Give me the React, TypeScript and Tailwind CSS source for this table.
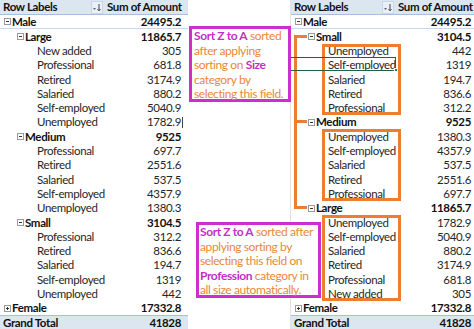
import React from "react";

type Line = { label: string; value: string };

function Expander({ plus = false }: { plus?: boolean }) {
  return (
    <span className="relative inline-block w-[7px] h-[7px] border border-[#9a9a9a] bg-white shrink-0">
      <span className="absolute left-[1px] top-[2px] w-[3px] h-px bg-[#333]" />
      {plus && <span className="absolute left-[2px] top-[1px] w-px h-[3px] bg-[#333]" />}
    </span>
  );
}

function SortButton() {
  return (
    <span className="ml-auto mr-0 w-[12px] h-[13px] border border-[#c9d6e6] bg-[#e9f0f8] flex items-center justify-center">
      <svg width="10" height="9" viewBox="0 0 10 9">
        <path d="M1 5 L4 5 L2.5 7 Z" fill="#666" />
        <path d="M7 1 L7 7.5 M5.5 6 L7 7.8 L8.5 6" stroke="#444" strokeWidth="1" fill="none" />
      </svg>
    </span>
  );
}

function Header() {
  return (
    <div className="flex h-[15px] bg-[#dce6f1] border-b border-[#a7c0de] font-bold text-[#111]">
      <div className="w-[103px] flex items-center pl-[3px]">
        Row Labels
        <SortButton />
      </div>
      <div className="flex-1 flex items-center pl-[4px] whitespace-nowrap">Sum of Amount</div>
    </div>
  );
}

function GroupRow({
  label,
  value,
  level,
  plus = false,
  className = "",
}: {
  label: string;
  value: string;
  level: 0 | 1;
  plus?: boolean;
  className?: string;
}) {
  return (
    <div className={`flex h-[14.3px] items-center font-bold text-[#111] ${className}`}>
      <div className={`w-[103px] flex items-center gap-[1px] ${level === 0 ? "pl-[4px]" : "pl-[17px]"}`}>
        <Expander plus={plus} />
        <span>{label}</span>
      </div>
      <div className="flex-1 text-right pr-[7px]">{value}</div>
    </div>
  );
}

function LeafRow({ label, value }: Line) {
  return (
    <div className="flex h-[14.3px] items-center text-[#262626]">
      <div className="w-[103px] pl-[37px] whitespace-nowrap">{label}</div>
      <div className="flex-1 text-right pr-[7px]">{value}</div>
    </div>
  );
}

function GrandTotal() {
  return (
    <div className="flex h-[14.3px] items-center font-bold text-[#111] bg-[#dce6f1] border-t border-[#a7c0de]">
      <div className="w-[103px] pl-[3px]">Grand Total</div>
      <div className="flex-1 text-right pr-[7px]">41828</div>
    </div>
  );
}

const leftGroups: { size: string; total: string; items: Line[] }[] = [
  {
    size: "Large",
    total: "11865.7",
    items: [
      { label: "New added", value: "305" },
      { label: "Professional", value: "681.8" },
      { label: "Retired", value: "3174.9" },
      { label: "Salaried", value: "880.2" },
      { label: "Self-employed", value: "5040.9" },
      { label: "Unemployed", value: "1782.9" },
    ],
  },
  {
    size: "Medium",
    total: "9525",
    items: [
      { label: "Professional", value: "697.7" },
      { label: "Retired", value: "2551.6" },
      { label: "Salaried", value: "537.5" },
      { label: "Self-employed", value: "4357.9" },
      { label: "Unemployed", value: "1380.3" },
    ],
  },
  {
    size: "Small",
    total: "3104.5",
    items: [
      { label: "Professional", value: "312.2" },
      { label: "Retired", value: "836.6" },
      { label: "Salaried", value: "194.7" },
      { label: "Self-employed", value: "1319" },
      { label: "Unemployed", value: "442" },
    ],
  },
];

const rightGroups = [...leftGroups].reverse().map((g) => ({ ...g, items: [...g.items].reverse() }));

export default function App() {
  return (
    <div className="relative w-[474px] h-[329px] overflow-hidden bg-white flex font-['Lato','Open_Sans',sans-serif] text-[11.5px] leading-none tracking-[-0.35px]">
      {/* Left pivot: default order */}
      <div className="relative w-[188px] shrink-0">
        <Header />
        <GroupRow label="Male" value="24495.2" level={0} className="border-b border-[#c9d8ec]" />
        {leftGroups.map((g) => (
          <div key={g.size}>
            <GroupRow label={g.size} value={g.total} level={1} />
            {g.items.map((it) => (
              <LeafRow key={it.label} {...it} />
            ))}
          </div>
        ))}
        <GroupRow label="Female" value="17332.8" level={0} plus />
        <GrandTotal />
        {/* cell cursor */}
        <span className="absolute left-[182px] top-[117px] w-px h-[11px] bg-[#444]" />
      </div>

      {/* Middle column with first note */}
      <div className="w-[102px] shrink-0 relative z-10">
        <div className="mt-[26px] ml-px w-[102px] h-[76px] border-[3px] border-[#cc2fcc] bg-white pl-[2px] text-[12px] leading-[14.5px] whitespace-nowrap text-[#e8883a] tracking-[-0.4px]">
          <b className="text-[#c42ec4]">Sort Z to A</b> sorted
          <br />
          after applying
          <br />
          sorting on <b className="text-[#c42ec4]">Size</b>
          <br />
          category by
          <br />
          selecting this field.
        </div>
      </div>

      {/* Right pivot: sorted Z to A */}
      <div className="relative w-[188px] shrink-0 border-l border-[#e2e2e2]">
        <Header />
        <GroupRow label="Male" value="24495.2" level={0} className="border-b border-[#c9d8ec]" />
        {rightGroups.map((g) => (
          <div key={g.size}>
            <GroupRow label={g.size} value={g.total} level={1} />
            <div className="relative">
              {g.items.map((it) => (
                <LeafRow key={it.label} {...it} />
              ))}
              <span className="absolute left-[31px] top-0 bottom-0 w-[79px] border-[3px] border-[#ed7d31]" />
            </div>
          </div>
        ))}
        <GroupRow label="Female" value="17332.8" level={0} plus />
        <GrandTotal />

        {/* orange tree bracket */}
        <span className="absolute left-[3px] top-[35px] w-[3px] h-[174px] bg-[#ed7d31]" />
        <span className="absolute left-[3px] top-[35px] w-[13px] h-[3px] bg-[#ed7d31]" />
        <span className="absolute left-[3px] top-[120px] w-[13px] h-[3px] bg-[#ed7d31]" />
        <span className="absolute left-[3px] top-[206px] w-[13px] h-[3px] bg-[#ed7d31]" />

        {/* selected cell with leader lines */}
        <span className="absolute -left-px top-[57px] w-[106px] h-px bg-[#1f5f4c]" />
        <span className="absolute -left-px top-[70px] w-[106px] h-px bg-[#1f5f4c]" />
        <span className="absolute left-[104px] top-[57px] w-px h-[14px] bg-[#1f5f4c]" />
        <span className="absolute left-[103px] top-[68px] w-[4px] h-[4px] bg-[#1f7a52] border border-white" />
      </div>

      {/* Second note overlapping the right pivot */}
      <div className="absolute left-[196px] top-[222px] w-[125px] h-[76px] border-[3px] border-[#cc2fcc] bg-white pl-px text-[12px] leading-[14.6px] whitespace-nowrap text-[#e8883a] tracking-[-0.4px] z-20">
        <b className="text-[#c42ec4]">Sort Z to A</b> sorted after
        <br />
        applying sorting by
        <br />
        selecting this field on
        <br />
        <b className="text-[#c42ec4]">Profession</b> category in
        <br />
        all size automatically.
      </div>
    </div>
  );
}
